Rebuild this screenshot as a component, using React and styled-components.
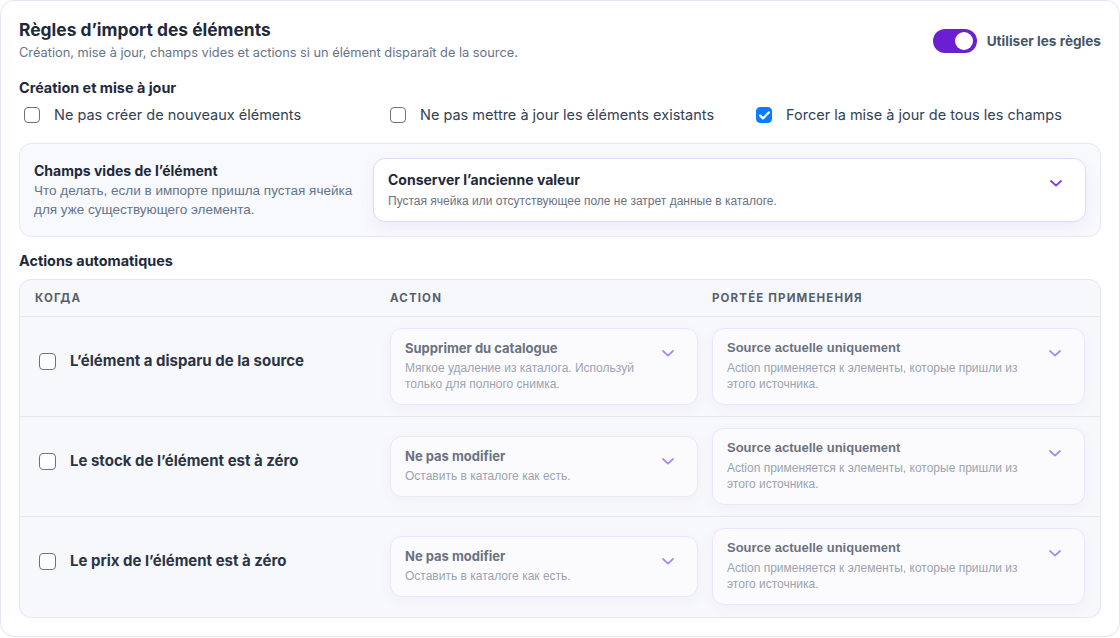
import React, { useState } from "react";
import styled, { createGlobalStyle } from "styled-components";

const GlobalStyle = createGlobalStyle`
  * { box-sizing: border-box; }
  html, body { margin: 0; padding: 0; background: #fff; }
  body { font-family: Inter, "Noto Sans", sans-serif; color: #1e293b; }
`;

const Card = styled.div`
  width: 1120px;
  height: 637px;
  border: 1px solid #ebe2fa;
  border-radius: 14px;
  background: #fff;
  padding: 18px 18px;
  display: flex;
  flex-direction: column;
`;

const Header = styled.div`
  display: flex;
  justify-content: space-between;
  align-items: center;
`;

const Title = styled.h1`
  margin: 0;
  font-size: 17.4px;
  line-height: 22px;
  font-weight: 700;
  color: #1e293b;
`;

const Subtitle = styled.p`
  margin: 3px 0 0;
  font-size: 12.8px;
  line-height: 18px;
  color: #64748b;
`;

const ToggleWrap = styled.label`
  display: flex;
  align-items: center;
  gap: 10px;
  font-size: 13.6px;
  font-weight: 700;
  color: #475569;
  cursor: pointer;
`;

const Track = styled.span`
  width: 44px;
  height: 24px;
  border-radius: 12px;
  background: ${(p) => (p.on ? "#6a1fd0" : "#cbd5e1")};
  display: flex;
  align-items: center;
  justify-content: ${(p) => (p.on ? "flex-end" : "flex-start")};
  padding: 3px 4px;
`;

const Knob = styled.span`
  width: 18px;
  height: 18px;
  border-radius: 50%;
  background: #fff;
`;

const SectionTitle = styled.h2`
  margin: ${(p) => p.top || 16}px 0 0;
  font-size: 14.4px;
  line-height: 20px;
  font-weight: 700;
  color: #1e293b;
`;

const OptionsRow = styled.div`
  display: grid;
  grid-template-columns: repeat(3, 350px);
  column-gap: 16px;
  margin-top: 6px;
`;

const CheckLabel = styled.label`
  display: flex;
  align-items: center;
  gap: ${(p) => p.gap || 14}px;
  font-size: ${(p) => (p.bold ? 15 : 14.5)}px;
  line-height: 22px;
  font-weight: ${(p) => (p.bold ? 700 : 400)};
  color: ${(p) => (p.bold ? "#2b3445" : "#334155")};
  cursor: pointer;
`;

const Box = styled.span`
  flex: none;
  width: ${(p) => p.size || 16}px;
  height: ${(p) => p.size || 16}px;
  margin-left: ${(p) => p.offset || 5}px;
  border-radius: 4px;
  border: 1px solid ${(p) => (p.checked ? "#0a7cff" : "#6b7280")};
  background: ${(p) => (p.checked ? "#0a7cff" : "#fff")};
  display: flex;
  align-items: center;
  justify-content: center;
`;

const Checkbox = ({ checked, onChange, children, size, offset, ...rest }) => (
  <CheckLabel onClick={onChange} {...rest}>
    <Box checked={checked} size={size} offset={offset}>
      {checked && (
        <svg width="11" height="9" viewBox="0 0 11 9" fill="none">
          <path d="M1.2 4.6 4 7.4 9.8 1.4" stroke="#fff" strokeWidth="2.2" strokeLinecap="round" strokeLinejoin="round" />
        </svg>
      )}
    </Box>
    {children}
  </CheckLabel>
);

const Panel = styled.div`
  margin-top: 17px;
  display: flex;
  align-items: center;
  gap: 14px;
  padding: 14px;
  background: #f8f9fc;
  border: 1px solid #e8e8f1;
  border-radius: 12px;
`;

const PanelText = styled.div`
  width: 325px;
  flex: none;
`;

const PanelTitle = styled.div`
  font-size: 14px;
  line-height: 19px;
  font-weight: 700;
  color: #1e293b;
`;

const PanelDesc = styled.div`
  margin-top: 1px;
  font-family: "Liberation Sans", Arial, sans-serif;
  font-size: 13.5px;
  line-height: 19px;
  color: #64748b;
`;

const Select = styled.div`
  flex: 1;
  display: flex;
  align-items: flex-start;
  justify-content: space-between;
  gap: 12px;
  align-self: ${(p) => (p.center ? "center" : "stretch")};
  padding: ${(p) => (p.muted ? "11px 14px 12px" : "12px 14px")};
  background: ${(p) => (p.muted ? "#fbfbfe" : "#fff")};
  border: 1px solid ${(p) => (p.muted ? "#ebe6f9" : "#e3d6fa")};
  border-radius: 12px;
  box-shadow: ${(p) =>
    p.muted ? "0 4px 12px rgba(120, 100, 190, 0.05)" : "0 6px 16px rgba(124, 58, 237, 0.07)"};
  cursor: pointer;
`;

const SelectTitle = styled.div`
  font-family: ${(p) => (p.alt ? '"Liberation Sans", Arial, sans-serif' : "Inter, sans-serif")};
  font-size: ${(p) => (p.muted ? 13 : 14)}px;
  line-height: ${(p) => (p.muted ? 16 : 18)}px;
  font-weight: 700;
  color: ${(p) => (p.muted ? "#6b7280" : "#1e293b")};
`;

const SelectDesc = styled.div`
  margin-top: 4px;
  font-family: "Liberation Sans", Arial, sans-serif;
  font-size: 12px;
  line-height: 16px;
  color: ${(p) => (p.muted ? "#9ca3af" : "#6b7280")};
`;

const Chevron = styled.svg`
  flex: none;
  margin-top: ${(p) => (p.muted ? 10 : 9)}px;
  margin-right: 9px;
`;

const Dropdown = ({ title, desc, muted, alt, center }) => (
  <Select muted={muted} center={center}>
    <div>
      <SelectTitle muted={muted} alt={alt}>{title}</SelectTitle>
      <SelectDesc muted={muted}>{desc}</SelectDesc>
    </div>
    <Chevron muted={muted} width="12" height="7" viewBox="0 0 12 7" fill="none">
      <path d="M1 1l5 4.6L11 1" stroke={muted ? "#a98bf0" : "#7c3aed"} strokeWidth="1.8" strokeLinecap="round" strokeLinejoin="round" />
    </Chevron>
  </Select>
);

const Table = styled.div`
  margin-top: 8px;
  flex: 1;
  background: #f7f8fb;
  border: 1px solid #e6e7ee;
  border-radius: 12px;
  overflow: hidden;
`;

const Grid = styled.div`
  display: grid;
  grid-template-columns: 341px 308px 1fr;
  column-gap: 14px;
  padding: 0 15px;
  align-items: center;
  border-bottom: ${(p) => (p.last ? "none" : "1px solid #e7e7f0")};
`;

const HeadRow = styled(Grid)`
  height: 37px;
`;

const HeadCell = styled.div`
  font-size: 11.5px;
  font-weight: 700;
  letter-spacing: 0.1em;
  text-transform: uppercase;
  color: #575f6d;
`;

const Row = styled(Grid)`
  height: 100px;
`;

const RuleLabel = styled.div`
  margin-bottom: 12px;
`;

const Cell = styled.div`
  display: flex;
  height: 100%;
  padding: 11px 0 12px;
`;

const rules = [
  {
    label: "L’élément a disparu de la source",
    action: "Supprimer du catalogue",
    actionDesc: "Мягкое удаление из каталога. Используй только для полного снимка.",
  },
  {
    label: "Le stock de l’élément est à zéro",
    action: "Ne pas modifier",
    actionDesc: "Оставить в каталоге как есть.",
  },
  {
    label: "Le prix de l’élément est à zéro",
    action: "Ne pas modifier",
    actionDesc: "Оставить в каталоге как есть.",
  },
];

export default function App() {
  const [enabled, setEnabled] = useState(true);
  const [opts, setOpts] = useState([false, false, true]);
  const [ruleOn, setRuleOn] = useState([false, false, false]);

  const toggleOpt = (i) => setOpts(opts.map((v, j) => (i === j ? !v : v)));
  const toggleRule = (i) => setRuleOn(ruleOn.map((v, j) => (i === j ? !v : v)));

  return (
    <>
      <GlobalStyle />
      <Card>
        <Header>
          <div>
            <Title>Règles d’import des éléments</Title>
            <Subtitle>Création, mise à jour, champs vides et actions si un élément disparaît de la source.</Subtitle>
          </div>
          <ToggleWrap onClick={() => setEnabled(!enabled)}>
            <Track on={enabled}>
              <Knob />
            </Track>
            Utiliser les règles
          </ToggleWrap>
        </Header>

        <SectionTitle>Création et mise à jour</SectionTitle>
        <OptionsRow>
          <Checkbox checked={opts[0]} onChange={() => toggleOpt(0)}>Ne pas créer de nouveaux éléments</Checkbox>
          <Checkbox checked={opts[1]} onChange={() => toggleOpt(1)}>Ne pas mettre à jour les éléments existants</Checkbox>
          <Checkbox checked={opts[2]} onChange={() => toggleOpt(2)}>Forcer la mise à jour de tous les champs</Checkbox>
        </OptionsRow>

        <Panel>
          <PanelText>
            <PanelTitle>Champs vides de l’élément</PanelTitle>
            <PanelDesc>Что делать, если в импорте пришла пустая ячейка для уже существующего элемента.</PanelDesc>
          </PanelText>
          <Dropdown
            title="Conserver l’ancienne valeur"
            desc="Пустая ячейка или отсутствующее поле не затрет данные в каталоге."
          />
        </Panel>

        <SectionTitle top={14}>Actions automatiques</SectionTitle>
        <Table>
          <HeadRow>
            <HeadCell>Когда</HeadCell>
            <HeadCell>Action</HeadCell>
            <HeadCell>Portée применения</HeadCell>
          </HeadRow>
          {rules.map((r, i) => (
            <Row key={i} last={i === rules.length - 1}>
              <RuleLabel>
                <Checkbox bold size={17} offset={4} checked={ruleOn[i]} onChange={() => toggleRule(i)}>
                  {r.label}
                </Checkbox>
              </RuleLabel>
              <Cell>
                <Dropdown muted center title={r.action} desc={r.actionDesc} />
              </Cell>
              <Cell>
                <Dropdown
                  muted
                  alt
                  title="Source actuelle uniquement"
                  desc="Action применяется к элементы, которые пришли из этого источника."
                />
              </Cell>
            </Row>
          ))}
        </Table>
      </Card>
    </>
  );
}
